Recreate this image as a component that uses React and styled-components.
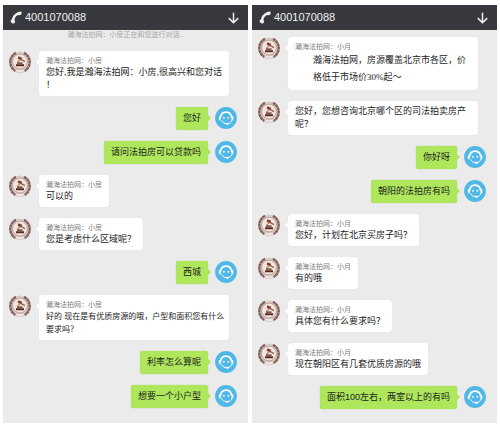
import React from "react";
import styled, { createGlobalStyle, css } from "styled-components";

const GlobalStyle = createGlobalStyle`
  * { box-sizing: border-box; }
  body {
    margin: 0;
    background: #ffffff;
    font-family: "Liberation Sans", "Noto Sans CJK SC", sans-serif;
  }
`;

const Page = styled.main`
  display: grid;
  grid-template-columns: 1fr 1fr;
  gap: 4px;
  padding: 5px 3px 3px;
`;

const Panel = styled.section`
  display: flex;
  flex-direction: column;
  padding-bottom: 14px;
  background: #ebebeb;
`;

const Header = styled.header`
  display: flex;
  align-items: center;
  height: 25px;
  padding: 0 9px 0 7px;
  background: #38393e;
  color: #f1f1f2;
`;

const Phone = styled.h1`
  flex: 1;
  margin: 0 0 0 3px;
  font-size: 11px;
  line-height: 13px;
  font-weight: 400;
`;

const CollapseButton = styled.button`
  display: flex;
  padding: 0;
  border: 0;
  background: none;
  color: inherit;
  cursor: pointer;
`;

const Notice = styled.p`
  margin: 0;
  font-size: 7px;
  line-height: 10px;
  text-align: center;
  color: #a6a6a6;
`;

const Messages = styled.ol`
  display: flex;
  flex-direction: column;
  gap: 11px;
  margin: 0;
  padding: ${(p) => (p.$afterNotice ? "11px" : "7px")} 0 0;
  list-style: none;
`;

const Row = styled.li`
  display: flex;
  align-items: flex-start;
  ${(p) =>
    p.$mine
      ? css`
          flex-direction: row-reverse;
          gap: 7px;
          padding: 0 11px 0 6px;
        `
      : css`
          gap: 8px;
          padding: 0 19px 0 6px;
        `}
`;

const Avatar = styled.svg`
  flex: none;
  width: 22px;
  height: 22px;
`;

const bubbleBase = css`
  position: relative;
  border-radius: 3px;

  &::before {
    content: "";
    position: absolute;
    top: 8px;
    border: 3px solid transparent;
  }
`;

const AgentBubble = styled.div`
  ${bubbleBase}
  flex: ${(p) => (p.$full ? "1" : "0 1 auto")};
  min-width: 0;
  padding: ${(p) => (p.$full ? "4px 4px 4px 7px" : "4px 7px")};
  background: #ffffff;
  box-shadow: 0 0 1px #cfcfcf;

  &::before {
    right: 100%;
    border-left-width: 0;
    border-right-color: #ffffff;
  }
`;

const UserBubble = styled.div`
  ${bubbleBase}
  padding: 5px 7px;
  background: #aee75c;
  box-shadow: 0 0 1px #86b845;

  &::before {
    left: 100%;
    border-right-width: 0;
    border-left-color: #aee75c;
  }
`;

const Name = styled.div`
  font-size: 7px;
  line-height: 11px;
  color: #7c7c7c;
`;

const Text = styled.p`
  margin: 0;
  font-size: ${(p) => (p.$small ? "8px" : "9px")};
  line-height: 13px;
  color: #1c1c1c;
  white-space: pre-line;
`;

const Intro = styled(Text)`
  padding-left: 18px;
  line-height: 17px;
  font-family: "Liberation Serif", "Noto Sans CJK SC", serif;
`;

function PhoneIcon() {
  return (
    <svg width="12" height="13" viewBox="0 0 12 13" aria-hidden="true">
      <path
        d="M3 10.5C2.6 6.6 5.4 3.1 9.3 2.3"
        fill="none"
        stroke="currentColor"
        strokeWidth="2.6"
      />
      <path
        d="M7.4 1.2 10.6.4Q11.8.4 11.7 1.7L11.3 3.4 8.6 4.5ZM.7 9.1 3.9 8.1 5.2 10.7 4.4 12.2Q3 13 1.6 12.1Q.3 11 .7 9.1Z"
        fill="currentColor"
      />
    </svg>
  );
}

function ArrowIcon() {
  return (
    <svg width="11" height="12" viewBox="0 0 11 12" aria-hidden="true">
      <path
        d="M5.5.8V10.7M.8 6.1 5.5 10.8 10.2 6.1"
        fill="none"
        stroke="currentColor"
        strokeWidth="1.5"
      />
    </svg>
  );
}

function AgentAvatar() {
  return (
    <Avatar viewBox="0 0 22 22" role="img" aria-label="客服头像">
      <circle cx="11" cy="11" r="10.5" fill="#d9cdc8" />
      <path
        d="M7 1.8C-.5 5.5-.5 16 6.5 20M15 1.8C22.5 5.5 22.5 16 15.5 20"
        fill="none"
        stroke="#83605a"
        strokeWidth="2.4"
        strokeDasharray="3 .3"
      />
      <circle cx="11" cy="10.5" r="7.4" fill="#f1e7e1" stroke="#a1786f" strokeWidth=".6" />
      <path d="M9.4 5.2 13.2 6.8 12.2 9.4 8.6 7.8Z" fill="#803f32" />
      <path d="M12 8.4 16 10.6" stroke="#9a5a3c" strokeWidth="1.2" />
      <path d="M11 8.6 8.4 11.6" stroke="#b98663" strokeWidth="1.4" />
      <path d="M8 11.4H13.6V12.8H8ZM7 13.2H15V15.2H7Z" fill="#54291f" />
      <path d="M6.5 18Q11 20 15.5 18L14.8 21Q11 22.4 7.2 21Z" fill="#f0e9e7" stroke="#b9a5a0" strokeWidth=".4" />
    </Avatar>
  );
}

function UserAvatar() {
  return (
    <Avatar viewBox="0 0 22 22" role="img" aria-label="用户头像">
      <circle cx="11" cy="11" r="10.9" fill="#50b8e7" />
      <path
        d="M5.6 10.5C6.2 3.4 15.8 3.4 16.6 10.5"
        fill="none"
        stroke="#ffffff"
        strokeWidth="1.7"
      />
      <path
        d="M4.8 9.8V12.4M17.4 9.8V12.4"
        stroke="#ffffff"
        strokeWidth="1.8"
        strokeLinecap="round"
      />
      <path
        d="M6.6 13.6C7.6 15.8 9.4 16.6 11.4 16.6M17 13.2C16.4 15.2 15 16.4 12.8 16.8"
        fill="none"
        stroke="#ffffff"
        strokeWidth="1"
        strokeLinecap="round"
      />
      <ellipse cx="12.4" cy="16.8" rx="1.6" ry="1" fill="#ffffff" />
      <circle cx="8.9" cy="10.8" r=".9" fill="#ffffff" />
      <circle cx="13.3" cy="10.8" r=".9" fill="#ffffff" />
    </Avatar>
  );
}

const chats = [
  {
    notice: "瀚海法拍网：小房正在和您进行对话..",
    messages: [
      { name: "瀚海法拍网：小房", text: "您好,我是瀚海法拍网：小房,很高兴和您对话\n！", full: true },
      { mine: true, text: "您好" },
      { mine: true, text: "请问法拍房可以贷款吗" },
      { name: "瀚海法拍网：小房", text: "可以的" },
      { name: "瀚海法拍网：小房", text: "您是考虑什么区域呢？" },
      { mine: true, text: "西城" },
      {
        name: "瀚海法拍网：小房",
        text: "好的 现在是有优质房源的哦，户型和面积您有什么\n要求吗？",
        full: true,
        small: true,
      },
      { mine: true, text: "利率怎么算呢" },
      { mine: true, text: "想要一个小户型" },
    ],
  },
  {
    messages: [
      {
        name: "瀚海法拍网：小月",
        text: "瀚海法拍网，房源覆盖北京市各区，价\n格低于市场价30%起～",
        full: true,
        intro: true,
      },
      { text: "您好，您想咨询北京哪个区的司法拍卖房产\n呢？", full: true },
      { mine: true, text: "你好呀" },
      { mine: true, text: "朝阳的法拍房有吗" },
      { name: "瀚海法拍网：小月", text: "您好，计划在北京买房子吗？" },
      { name: "瀚海法拍网：小月", text: "有的哦" },
      { name: "瀚海法拍网：小月", text: "具体您有什么要求吗？" },
      { name: "瀚海法拍网：小月", text: "现在朝阳区有几套优质房源的哦" },
      { mine: true, text: "面积100左右，两室以上的有吗" },
    ],
  },
];

function Message({ mine, name, text, full, small, intro }) {
  if (mine) {
    return (
      <Row $mine>
        <UserAvatar />
        <UserBubble>
          <Text>{text}</Text>
        </UserBubble>
      </Row>
    );
  }
  return (
    <Row>
      <AgentAvatar />
      <AgentBubble $full={full}>
        {name && <Name>{name}</Name>}
        {intro ? <Intro>{text}</Intro> : <Text $small={small}>{text}</Text>}
      </AgentBubble>
    </Row>
  );
}

export default function App() {
  return (
    <>
      <GlobalStyle />
      <Page lang="zh-CN">
        {chats.map((chat, i) => (
          <Panel key={i}>
            <Header>
              <PhoneIcon />
              <Phone>4001070088</Phone>
              <CollapseButton type="button" aria-label="收起">
                <ArrowIcon />
              </CollapseButton>
            </Header>
            {chat.notice && <Notice>{chat.notice}</Notice>}
            <Messages $afterNotice={Boolean(chat.notice)}>
              {chat.messages.map((m, j) => (
                <Message key={j} {...m} />
              ))}
            </Messages>
          </Panel>
        ))}
      </Page>
    </>
  );
}
